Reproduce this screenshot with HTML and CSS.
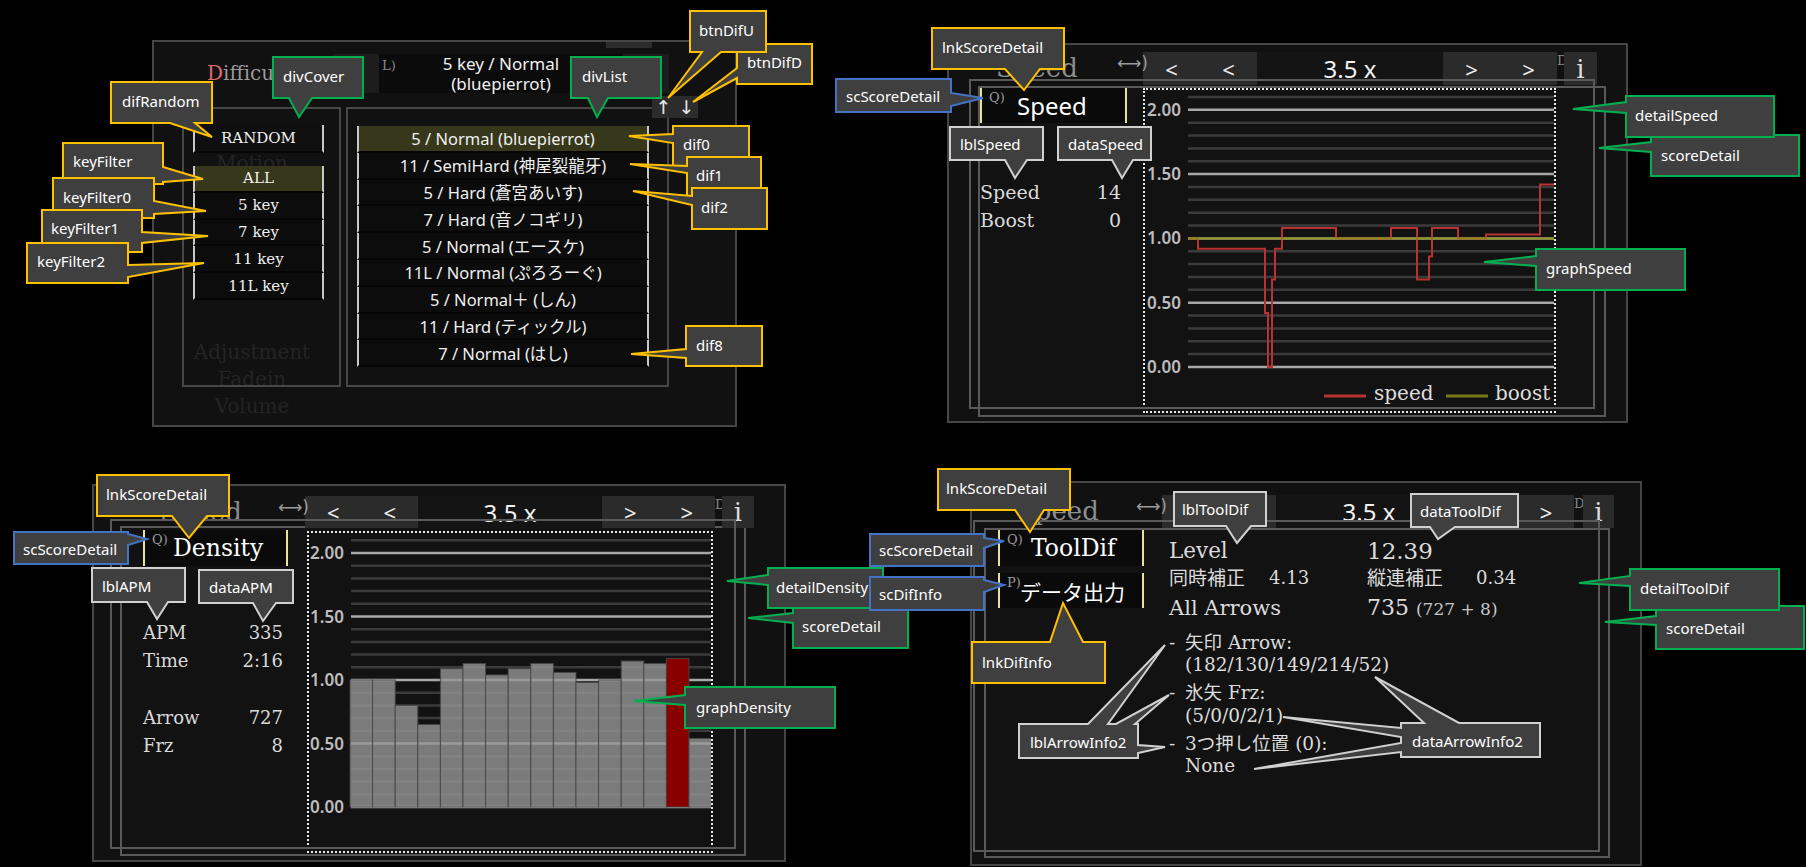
FILE: index.html
```html
<!DOCTYPE html>
<html lang="ja">
<head>
<meta charset="utf-8">
<title>Score detail annotations</title>
<link rel="stylesheet" href="styles.css">
</head>
<body>

<section class="panel p1">
  <div class="p1-ghost">
    <div class="gm">Motion</div><div class="sp1"></div><div>Adjustment</div><div>Fadein</div><div>Volume</div>
  </div>
  <div class="p1-tab"></div>
  <div class="p1-head">
    <div class="p1-title"><span class="red">D</span>ifficulty</div>
    <div class="p1-side"></div>
    <div class="p1-sel"><span class="p1-hint">L)</span>5 key / Normal<br>(bluepierrot)</div>
    <div class="p1-side"></div>
  </div>
  <div class="p1-body">
    <div class="p1-cover">
      <div class="row random">RANDOM</div>
      <div class="klist">
        <div class="row sel">ALL</div>
        <div class="row">5 key</div>
        <div class="row">7 key</div>
        <div class="row">11 key</div>
        <div class="row">11L key</div>
      </div>
    </div>
    <div class="p1-list">
      <div class="row sel">5 / Normal (bluepierrot)</div>
      <div class="row">11 / SemiHard (神屋裂龍牙)</div>
      <div class="row">5 / Hard (蒼宮あいす)</div>
      <div class="row">7 / Hard (音ノコギリ)</div>
      <div class="row">5 / Normal (エースケ)</div>
      <div class="row">11L / Normal (ぷろろーぐ)</div>
      <div class="row">5 / Normal＋ (しん)</div>
      <div class="row">11 / Hard (ティックル)</div>
      <div class="row">7 / Normal (はし)</div>
    </div>
  </div>
  <div class="p1-updown"><span>↑</span><span>↓</span></div>
</section>

<section class="panel p2">
  <header class="ph">
    <div class="ph-title">Speed</div>
    <div class="ph-lr">⟷)</div>
    <div class="nav">
      <span class="nb">&lt;</span><span class="nb">&lt;</span>
      <span class="nmid">3.5 x</span>
      <span class="nb">&gt;</span><span class="nb">&gt;</span>
      <span class="nd">D)</span>
      <span class="ni">i</span>
    </div>
  </header>
  <div class="rect-b">
    <div class="lcol">
      <div class="sbtn"><span class="q">Q)</span>Speed</div>
      <div class="stats">
        <div>Speed</div><div class="v">14</div>
        <div>Boost</div><div class="v">0</div>
      </div>
    </div>
    <div class="graph">
      <svg class="gsvg" width="409" height="321" viewBox="0 0 409 321">
        <path class="gmin" d="M43,6.9H409M43,32.7H409M43,45.5H409M43,58.4H409M43,71.2H409M43,97H409M43,109.8H409M43,122.7H409M43,135.5H409M43,161.3H409M43,174.1H409M43,187H409M43,199.8H409M43,225.6H409M43,238.4H409M43,251.3H409M43,264.1H409"/>
        <path class="gmaj" d="M43,19.8H409M43,84.1H409M43,148.4H409M43,212.7H409M43,277H409"/>
        <text class="glbl" x="2" y="26">2.00</text>
        <text class="glbl" x="2" y="90">1.50</text>
        <text class="glbl" x="2" y="154">1.00</text>
        <text class="glbl" x="2" y="219">0.50</text>
        <text class="glbl" x="2" y="283">0.00</text>
        <path class="gspeed" d="M44,148.4H53V158.7H120V223H123V277H127V189.6H130V158.7H137V138.1H191V148.4H246V138.1H272V189.6H284V166.4H287V138.1H313V148.4H341V144.5H395V94.4H409"/>
        <path class="gboost" d="M43,148.4H409"/>
        <path class="gspeed leg" d="M179,306H221"/>
        <text class="gleg" x="229" y="310">speed</text>
        <path class="gboost leg" d="M301,306H343"/>
        <text class="gleg" x="350" y="310">boost</text>
      </svg>
    </div>
  </div>
  <div class="rect-a"></div>
</section>

<section class="panel p3">
  <header class="ph">
    <div class="ph-title">Speed</div>
    <div class="ph-lr">⟷)</div>
    <div class="nav">
      <span class="nb">&lt;</span><span class="nb">&lt;</span>
      <span class="nmid">3.5 x</span>
      <span class="nb">&gt;</span><span class="nb">&gt;</span>
      <span class="nd">D)</span>
      <span class="ni">i</span>
    </div>
  </header>
  <div class="rect-b">
    <div class="lcol">
      <div class="sbtn serif"><span class="q">Q)</span>Density</div>
      <div class="stats">
        <div>APM</div><div class="v">335</div>
        <div>Time</div><div class="v">2:16</div>
        <div></div><div></div>
        <div>Arrow</div><div class="v">727</div>
        <div>Frz</div><div class="v">8</div>
      </div>
    </div>
    <div class="graph">
      <svg class="gsvg" width="402" height="318" viewBox="0 0 402 318">
        <path class="gmin" d="M42,7.3H402M42,32.7H402M42,45.4H402M42,58.1H402M42,70.8H402M42,96.2H402M42,108.9H402M42,121.6H402M42,134.3H402M42,159.7H402M42,172.4H402M42,185.1H402M42,197.8H402M42,223.2H402M42,235.9H402M42,248.6H402M42,261.3H402"/>
        <path class="gmaj" d="M42,20H402M42,83.5H402M42,147H402M42,210.5H402M42,274H402"/>
        <g class="gbar">
          <rect x="41" y="147" width="22.6" height="127"/>
          <rect x="63.6" y="147" width="22.6" height="127"/>
          <rect x="86.2" y="172.4" width="22.6" height="101.6"/>
          <rect x="108.8" y="191.5" width="22.6" height="82.5"/>
          <rect x="131.4" y="135.6" width="22.6" height="138.4"/>
          <rect x="154" y="130.5" width="22.6" height="143.5"/>
          <rect x="176.6" y="141.9" width="22.6" height="132.1"/>
          <rect x="199.2" y="135.6" width="22.6" height="138.4"/>
          <rect x="221.8" y="130.5" width="22.6" height="143.5"/>
          <rect x="244.4" y="139.4" width="22.6" height="134.6"/>
          <rect x="267" y="149.5" width="22.6" height="124.5"/>
          <rect x="289.6" y="147" width="22.6" height="127"/>
          <rect x="312.2" y="128" width="22.6" height="146"/>
          <rect x="334.8" y="130.5" width="22.6" height="143.5"/>
          <rect class="gred" x="357.4" y="125.4" width="22.6" height="148.6"/>
          <rect x="380" y="205.4" width="22.6" height="68.6"/>
        </g>
        <text class="glbl" x="1" y="26">2.00</text>
        <text class="glbl" x="1" y="89.5">1.50</text>
        <text class="glbl" x="1" y="153">1.00</text>
        <text class="glbl" x="1" y="216.5">0.50</text>
        <text class="glbl" x="1" y="280">0.00</text>
      </svg>
    </div>
  </div>
  <div class="rect-a"></div>
</section>

<section class="panel p4">
  <header class="ph">
    <div class="ph-title">Speed</div>
    <div class="ph-lr">⟷)</div>
    <div class="nav">
      <span class="nb">&lt;</span><span class="nb">&lt;</span>
      <span class="nmid">3.5 x</span>
      <span class="nb r">&gt;</span><span class="nb r">&gt;</span>
      <span class="nd">D)</span>
      <span class="ni">i</span>
    </div>
  </header>
  <div class="rect-b">
    <div class="lcol">
      <div class="sbtn serif"><span class="q">Q)</span>ToolDif</div>
      <div class="sbtn sbtn2"><span class="q">P)</span>データ出力</div>
    </div>
    <div class="tcol">
      <div class="trow t1"><span class="tl">Level</span><span class="tbig">12.39</span></div>
      <div class="trow t2"><span class="tk1">同時補正</span><span class="tk2">4.13</span><span class="tk3">縦連補正</span><span>0.34</span></div>
      <div class="trow t3"><span class="tl">All Arrows</span><span class="tv">735 <span class="sub">(727 + 8)</span></span></div>
      <ul class="alist">
        <li><span class="dash">-</span>矢印 Arrow:<br>(182/130/149/214/52)</li>
        <li><span class="dash">-</span>氷矢 Frz:<br>(5/0/0/2/1)</li>
        <li><span class="dash">-</span>3つ押し位置 (0):<br>None</li>
      </ul>
    </div>
  </div>
  <div class="rect-a"></div>
</section>

<svg class="callouts" width="1806" height="867" viewBox="0 0 1806 867">
  <g class="co cy"><path d="M111,82H212V123H195L212,137L170,123H111Z"/><text x="122" y="101">difRandom</text></g>
  <g class="co cg"><path d="M273,57H363V98H312L299,117L289,98H273Z"/><text x="283" y="76">divCover</text></g>
  <g class="co cy"><path d="M63,143H163V167L203,179L163,182V184H63Z"/><text x="73" y="161">keyFilter</text></g>
  <g class="co cy"><path d="M53,178H154V201L206,211L154,214V218H53Z"/><text x="63" y="197">keyFilter0</text></g>
  <g class="co cy"><path d="M42,210H142V232L208,236L142,243V252H42Z"/><text x="51" y="228">keyFilter1</text></g>
  <g class="co cy"><path d="M27,243H128V265L204,263L128,277V283H27Z"/><text x="37" y="261">keyFilter2</text></g>
  <g class="co cy"><path d="M737,44H812V84H737V78L693,102L737,68Z"/><text x="747" y="62">btnDifD</text></g>
  <g class="co cy"><path d="M690,11H766V52H721L668,98L702,52H690Z"/><text x="699" y="30">btnDifU</text></g>
  <g class="co cg"><path d="M571,57H661V98H608L597,117L588,98H571Z"/><text x="582" y="76">divList</text></g>
  <g class="co cy"><path d="M673,126H749V167H673V143L629,136L673,134Z"/><text x="683" y="144">dif0</text></g>
  <g class="co cy"><path d="M687,157H761V198H687V173L630,164L687,166Z"/><text x="696" y="175">dif1</text></g>
  <g class="co cy"><path d="M692,188H767V229H692V205L633,191L692,196Z"/><text x="701" y="207">dif2</text></g>
  <g class="co cy"><path d="M686,326H762V366H686V358L631,354L686,349Z"/><text x="696" y="345">dif8</text></g>

  <g class="co cy"><path d="M932,28H1064V69H1040L1024,90L1005,69H932Z"/><text x="942" y="47">lnkScoreDetail</text></g>
  <g class="co cb"><path d="M836,79H951V93L983,98L951,106V112H836Z"/><text x="846" y="96">scScoreDetail</text></g>
  <g class="co cw"><path d="M950,127H1043V160H1027L1015,178L1005,160H950Z"/><text x="960" y="144">lblSpeed</text></g>
  <g class="co cw"><path d="M1058,127H1151V160H1133L1122,178L1112,160H1058Z"/><text x="1068" y="144">dataSpeed</text></g>
  <g class="co cg"><path d="M1651,135H1799V176H1651V152L1599,148L1651,142Z"/><text x="1661" y="155">scoreDetail</text></g>
  <g class="co cg"><path d="M1626,96H1774V137H1626V113L1573,109L1626,102Z"/><text x="1635" y="115">detailSpeed</text></g>
  <g class="co cg"><path d="M1536,249H1685V290H1536V266L1484,262L1536,256Z"/><text x="1546" y="268">graphSpeed</text></g>

  <g class="co cy"><path d="M97,475H229V516H207L189,538L172,516H97Z"/><text x="106" y="494">lnkScoreDetail</text></g>
  <g class="co cb"><path d="M14,532H128V534L147,539L128,545V564H14Z"/><text x="23" y="549">scScoreDetail</text></g>
  <g class="co cw"><path d="M92,568H185V602H168L157,619L147,602H92Z"/><text x="102" y="586">lblAPM</text></g>
  <g class="co cw"><path d="M199,570H293V603H276L263,621L253,603H199Z"/><text x="209" y="587">dataAPM</text></g>
  <g class="co cg"><path d="M793,604H908V648H793V623L748,618L793,613Z"/><text x="802" y="626">scoreDetail</text></g>
  <g class="co cg"><path d="M768,568H883V608H768V585L727,581L768,575Z"/><text x="776" y="587">detailDensity</text></g>
  <g class="co cg"><path d="M685,687H835V728H685V705L634,701L685,695Z"/><text x="696" y="707">graphDensity</text></g>

  <g class="co cy"><path d="M938,469H1070V510H1044L1030,532L1015,510H938Z"/><text x="946" y="488">lnkScoreDetail</text></g>
  <g class="co cb"><path d="M870,534H984V538L1004,541L984,548V566H870Z"/><text x="879" y="550">scScoreDetail</text></g>
  <g class="co cb"><path d="M870,577H984V580L1004,585L984,592V610H870Z"/><text x="879" y="594">scDifInfo</text></g>
  <g class="co cy"><path d="M972,642H1050L1063,603L1083,642H1105V683H972Z"/><text x="982" y="662">lnkDifInfo</text></g>
  <g class="co cw"><path d="M1174,492H1266V526H1251L1237,543L1226,526H1174Z"/><text x="1182" y="509">lblToolDif</text></g>
  <g class="co cw"><path d="M1411,494H1518V527H1455L1438,539L1430,527H1411Z"/><text x="1420" y="511">dataToolDif</text></g>
  <g class="co cg"><path d="M1656,606H1804V649H1656V625L1605,622L1656,616Z"/><text x="1666" y="628">scoreDetail</text></g>
  <g class="co cg"><path d="M1630,569H1779V610H1630V586L1579,583L1630,576Z"/><text x="1640" y="588">detailToolDif</text></g>
  <g class="co cw"><path d="M1019,724H1088L1165,645L1108,724H1116L1169,695L1135,724H1138V745L1165,747L1138,753V758H1019Z"/><text x="1030" y="742">lblArrowInfo2</text></g>
  <g class="co cw"><path d="M1401,723H1424L1375,677L1459,723H1540V757H1401V752L1254,769L1401,743V737L1283,717L1401,728Z"/><text x="1412" y="741">dataArrowInfo2</text></g>
</svg>

</body>
</html>
```

FILE: styles.css
```css
* { box-sizing: border-box; margin: 0; padding: 0; }
html { background: #000; }
body {
  position: relative;
  width: 1806px;
  height: 867px;
  overflow: hidden;
  background: #000;
  color: #eee;
  font-family: "Noto Sans", "Noto Sans CJK JP", sans-serif;
}
.serif { font-family: "DejaVu Serif", "Noto Sans CJK JP", serif; }

/* ---------- shared panel pieces ---------- */
.panel {
  position: absolute;
  z-index: 0;
  background: #111;
  border: 2px solid #464646;
}
.rect-a {
  position: absolute;
  border: 2px solid #5a5a5a;
  pointer-events: none;
}
.rect-b {
  display: flex;
  border: 2px solid #5a5a5a;
  background: #121212;
}
.ph { display: flex; height: 33px; }
.ph-title {
  flex: none;
  font-family: "DejaVu Serif", serif;
  font-size: 26px;
  line-height: 33px;
  color: #8e8e8e;
  white-space: nowrap;
}
.ph-lr {
  position: relative;
  z-index: 1;
  flex: none;
  width: 26px;
  font-family: "DejaVu Sans", sans-serif;
  font-size: 17px;
  line-height: 22px;
  color: #9a9a9a;
  white-space: nowrap;
}
.nav { display: flex; height: 100%; flex: none; }
.nb {
  display: flex; align-items: center; justify-content: center;
  width: 57px;
  background: #2b2b2b;
  font-size: 22px;
  color: #eee;
}
.nmid {
  display: flex; align-items: center; justify-content: center;
  width: 186px;
  background: #141414;
  font-size: 24px;
  color: #f2f2f2;
}
.nd {
  width: 7px;
  font-family: "DejaVu Serif", serif;
  font-size: 13px;
  line-height: 18px;
  color: #8a8a8a;
  white-space: nowrap;
}
.ni {
  display: flex; align-items: center; justify-content: center;
  width: 33px;
  background: #2b2b2b;
  font-family: "DejaVu Serif", serif;
  font-size: 26px;
  color: #ddd;
}
.lcol { display: flex; flex-direction: column; flex: none; }
.sbtn {
  position: relative;
  display: flex; align-items: center;
  background: #0a0a0a;
  border-left: 2px solid #e4e49a;
  border-right: 2px solid #e4e49a;
  color: #fff;
  white-space: nowrap;
}
.sbtn .q {
  position: absolute;
  left: 7px; top: 2px;
  font-family: "DejaVu Serif", serif;
  font-size: 13px;
  color: #9a9a9a;
}
.stats {
  display: grid;
  grid-template-columns: 1fr auto;
  font-family: "DejaVu Serif", serif;
  color: #dadada;
}
.stats .v { text-align: right; }
.graph { flex: none; border: 2px dotted #e8e8e8; }
.gsvg { display: block; }
.gmin { stroke: #3b3b3b; stroke-width: 2.5; fill: none; }
.gmaj { stroke: #a8a8a8; stroke-width: 2.5; fill: none; }
.glbl { font-family: "Noto Sans", sans-serif; font-size: 17px; font-weight: 600; fill: #bdbdbd; }
.gspeed { stroke: #b83232; stroke-width: 2; fill: none; }
.gboost { stroke: #8c8c1c; stroke-width: 2.5; fill: none; opacity: .85; }
.leg { stroke-width: 3; }
.gleg { font-family: "DejaVu Serif", serif; font-size: 20px; fill: #dcdcdc; }
.gbar rect { fill: rgba(150,150,150,.8); stroke: rgba(70,70,70,.9); stroke-width: 1; }
.gbar .gred { fill: #880000; }

/* ---------- panel 1 : difficulty selector ---------- */
.p1 { left: 152px; top: 40px; width: 585px; height: 387px; padding-top: 12px; }
.p1-ghost {
  position: absolute;
  z-index: -1;
  left: 38px; top: 111px;
  width: 120px;
  text-align: center;
  font-family: "DejaVu Serif", serif;
  font-size: 20px;
  line-height: 27px;
  color: #242424;
}
.p1-ghost .gm { height: 20px; line-height: 20px; }
.p1-ghost .sp1 { height: 165.5px; }
.p1-tab { position: absolute; left: 452px; top: 0; width: 46px; height: 6px; background: #2c2c2c; }
.p1-head { display: flex; height: 39px; }
.p1-title {
  width: 179px;
  padding-left: 53px;
  font-family: "DejaVu Serif", serif;
  font-size: 20px;
  line-height: 39px;
  color: #9a9a9a;
  white-space: nowrap;
}
.p1-title .red { color: #e06a6a; }
.p1-side { width: 46px; background: #1d1d1d; }
.p1-sel {
  position: relative;
  width: 244px;
  background: #0b0b0b;
  display: flex; align-items: center; justify-content: center;
  text-align: center;
  font-size: 17px;
  line-height: 20px;
  color: #f0f0f0;
}
.p1-hint {
  position: absolute;
  left: 3px; top: 2px;
  font-family: "DejaVu Serif", serif;
  font-size: 13px;
  color: #888;
}
.p1-updown {
  position: absolute;
  left: 498px; top: 54px;
  width: 46px; height: 22px;
  display: flex;
  background: #2c2c2c;
  font-family: "DejaVu Sans", sans-serif;
  font-size: 19px;
  line-height: 22px;
  color: #e6e6e6;
}
.p1-updown span { width: 23px; text-align: center; }
.p1-body { display: flex; gap: 5px; margin: 14px 0 0 28px; }
.p1-cover {
  width: 159px; height: 280px;
  border: 2px solid #474747;
  padding: 16px 0 0 9px;
}
.p1-list {
  width: 323px; height: 280px;
  border: 2px solid #474747;
  padding: 17px 0 0 9px;
}
.row {
  display: flex; align-items: center; justify-content: center;
  height: 26.8px;
  border-left: 2px solid #c8c8c8;
  border-right: 2px solid #c8c8c8;
  border-bottom: 2px solid #050505;
  background: rgba(12,12,12,.85);
  color: #f0f0f0;
  white-space: nowrap;
}
.row.sel { background: #37371b; }
.p1-cover .row { width: 131px; font-family: "DejaVu Serif", serif; font-size: 15px; }
.p1-cover .random { height: 28px; background: #0f0f0f; }
.klist { margin-top: 13px; }
.p1-list .row { width: 292px; font-size: 16.5px; }

/* ---------- panel 2 : speed ---------- */
.p2 { left: 947px; top: 43px; width: 681px; height: 380px; padding-top: 7px; }
.p2 .rect-a { left: 20px; top: 34px; width: 626px; height: 330px; }
.p2 .ph-title { width: 168px; padding-left: 47px; }
.p2 .rect-b { margin: 1px 0 0 29px; width: 628px; height: 331px; }
.p2 .lcol { width: 163px; }
.p2 .sbtn { width: 147px; height: 35px; padding-left: 35px; font-size: 24px; }
.p2 .stats { width: 141px; margin-top: 55px; font-size: 19px; }
.p2 .stats > div { height: 28px; line-height: 28px; }
.p2 .graph { width: 413px; height: 325px; }

/* ---------- panel 3 : density ---------- */
.p3 { left: 92px; top: 484px; width: 694px; height: 378px; padding-top: 10px; }
.p3 .rect-a { left: 16px; top: 33px; width: 626px; height: 330px; }
.p3 .ph { height: 32px; }
.p3 .ph-title { width: 184px; padding-left: 66px; line-height: 32px; }
.p3 .ph-lr { width: 27px; }
.p3 .nb { width: 56.5px; }
.p3 .nmid { width: 184px; }
.p3 .ni { width: 32px; }
.p3 .rect-b { margin: -2px 0 0 26px; width: 626px; height: 330px; }
.p3 .lcol { width: 185px; padding: 2px 0 0 21px; }
.p3 .sbtn { width: 145px; height: 36px; padding-left: 28px; font-size: 23.5px; }
.p3 .stats { width: 140px; margin-top: 53px; font-size: 18px; }
.p3 .stats > div { height: 28.3px; line-height: 28.3px; }
.p3 .graph { width: 406px; height: 322px; margin-top: 3px; }

/* ---------- panel 4 : tool difficulty ---------- */
.p4 { left: 970px; top: 481px; width: 672px; height: 385px; padding-top: 12px; }
.p4 .rect-a { left: 1px; top: 37px; width: 627px; height: 332px; }
.p4 .ph-title { width: 164px; padding-left: 45px; }
.p4 .nb.r { width: 56px; }
.p4 .nd { width: 9px; }
.p4 .ni { width: 31px; }
.p4 .rect-b { margin: 0 0 0 12px; width: 626px; height: 330px; }
.p4 .lcol { width: 183px; padding-left: 12px; }
.p4 .sbtn { width: 146px; height: 36px; padding-left: 31px; font-size: 23.5px; }
.p4 .sbtn2 {
  margin-top: 7px; height: 35px; padding-left: 20px;
  font-family: "Noto Sans CJK JP", sans-serif; font-size: 21px;
}
.tcol {
  padding-top: 6px;
  font-family: "DejaVu Serif", "Noto Sans CJK JP", serif;
  color: #dcdcdc;
  white-space: nowrap;
}
.trow { display: flex; }
.tl { width: 198px; }
.t1 { height: 30px; line-height: 30px; font-size: 21.5px; }
.t1 .tbig { font-size: 23px; }
.t2 { height: 24px; line-height: 24px; font-size: 19px; }
.tk1 { width: 100px; }
.tk2 { width: 98px; font-size: 18px; }
.tk3 { width: 109px; }
.t2 span:last-child { font-size: 18px; }
.t3 { margin-top: 3px; height: 30px; line-height: 30px; font-size: 21px; }
.t3 .tv { font-size: 22px; }
.t3 .sub { font-size: 17px; color: #c8c8c8; }
.alist {
  list-style: none;
  margin-top: 8.5px;
  font-size: 18.5px;
  line-height: 22.5px;
}
.alist li { padding-left: 16px; }
.alist li + li { margin-top: 5.5px; }
.dash { display: inline-block; width: 16px; margin-left: -16px; }

/* ---------- callouts ---------- */
.callouts { position: absolute; left: 0; top: 0; z-index: 1; pointer-events: none; }
.co path { fill: #3f3f3f; stroke-width: 2; stroke-linejoin: miter; }
.co text {
  font-family: "Noto Sans", sans-serif;
  font-size: 15px;
  fill: #fff;
  dominant-baseline: central;
}
.cy path { stroke: #ffc000; }
.cg path { stroke: #00b050; }
.cb path { stroke: #4472c4; }
.cw path { stroke: #d0d0d0; }
```
